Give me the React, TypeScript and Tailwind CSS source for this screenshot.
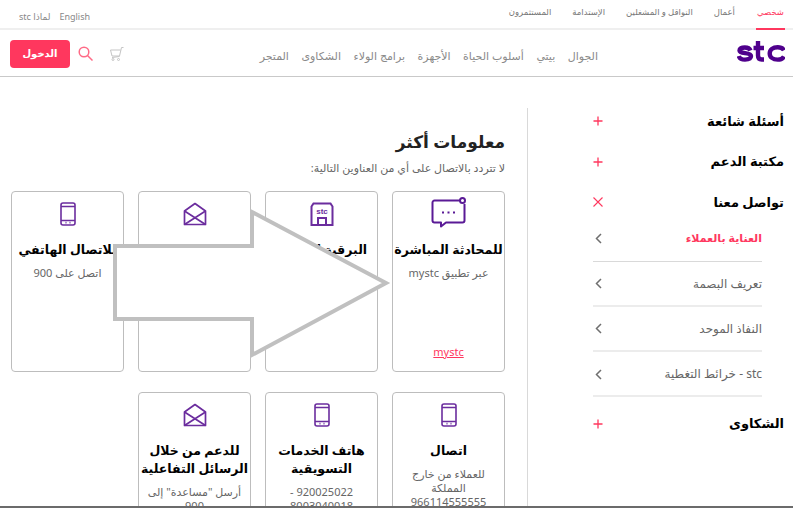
const font = { fontFamily: '"Noto Sans", "DejaVu Sans", sans-serif' }

function Phone() {
  return (
    <svg width="16" height="24" viewBox="0 0 16 24" fill="none" stroke="#6b2d9e" strokeWidth="1.6" className="block">
      <rect x="1" y="1" width="14" height="22" rx="2" />
      <path d="M1 4.500h14M1 18.500h14" />
      <path d="M5.500 20.600h1M9.500 20.600h1" />
    </svg>
  )
}

function Mail() {
  return (
    <svg width="24" height="24" viewBox="0 0 24 24" fill="none" stroke="#6b2d9e" strokeWidth="1.7" strokeLinejoin="round" className="block">
      <path d="M1.500 9 12 1.500 22.500 9v13.500h-21z" />
      <path d="M1.500 9 22.500 22.500M22.500 9 1.500 22.500" />
    </svg>
  )
}

function Store() {
  return (
    <svg width="24" height="24" viewBox="0 0 24 24" fill="none" stroke="#6b2d9e" strokeWidth="2" className="block">
      <path d="M3.500 1.500h17l2 3V23h-21V4.500z" />
      <path d="M8 23v-7h8v7" />
      <text x="12" y="11.500" textAnchor="middle" fontSize="8" fontWeight="700" fill="#6b2d9e" stroke="none" fontFamily="Liberation Sans">stc</text>
    </svg>
  )
}

function Chat() {
  return (
    <svg width="36" height="31" viewBox="0 0 36 31" fill="none" stroke="#5a1a96" strokeWidth="2" strokeLinejoin="round" className="-mt-[3px] block">
      <path d="M29 3.500H3.500a2 2 0 0 0-2 2v18a2 2 0 0 0 2 2h6.500v4l5-4h16.500a2 2 0 0 0 2-2V7" />
      <circle cx="31.500" cy="3.500" r="2.500" />
      <path d="M11 15.500h2M16.500 15.500h2M22 15.500h2" />
    </svg>
  )
}

function Chevron() {
  return (
    <svg width="7" height="11" viewBox="0 0 7 11" fill="none" stroke="#6f6f6f" strokeWidth="1.500">
      <path d="M6 1 1.500 5.500 6 10" />
    </svg>
  )
}

function Plus() {
  return (
    <svg width="10" height="10" viewBox="0 0 10 10" fill="none" stroke="#ff375e" strokeWidth="1.300">
      <path d="M5 .5v9M.5 5h9" />
    </svg>
  )
}

function Close() {
  return (
    <svg width="10" height="10" viewBox="0 0 10 10" fill="none" stroke="#ff375e" strokeWidth="1.100">
      <path d="M.5.5l9 9M9.500.5l-9 9" />
    </svg>
  )
}

function Logo() {
  return (
    <svg width="48" height="21" viewBox="0 0 48 21" fill="none" stroke="#4f008c" strokeWidth="4.400" className="block">
      <path d="M13.500 9.500c-.8-2-2.900-3-5.700-3-3.400 0-5.300 1.100-5.300 2.900 0 4 11.500 1.400 11.500 5.700 0 2-2.200 3.500-6 3.500-3.400 0-5.500-1.200-6.200-3.600" />
      <path d="M21 0v14.500c0 2.500 1.300 4 3.700 4h2.300M16.500 7h10.500" />
      <path d="M47 9.300c-1.100-2-3.200-3.100-6.300-3.100-4.900 0-8 2.500-8 6.200s3.100 6.200 8 6.200c3.100 0 5.200-1.100 6.300-3.100" />
    </svg>
  )
}

type CardProps = {
  icon: React.ReactNode
  title: string[]
  lines: string[]
  link?: string
}

function InfoCard({ icon, title, lines, link }: CardProps) {
  return (
    <div className="relative flex h-[181px] flex-col items-center rounded-sm border border-[#bdbdbd] bg-white px-2 text-center">
      <div className="flex h-[44px] items-center">{icon}</div>
      <div className="mt-[5px] flex min-h-[18px] flex-col">
        {title.map((t) => (
          <p key={t} className="text-[12.5px] font-bold leading-[18px] text-black whitespace-nowrap">
            {t}
          </p>
        ))}
      </div>
      <div className="mt-[7px]">
        {lines.map((l) => (
          <p key={l} className="text-[11px] leading-[14px] text-[#666]">
            {l}
          </p>
        ))}
      </div>
      {link && (
        <a className="mt-auto mb-[12px] text-[11px] leading-[14px] text-[#ff375e] underline">{link}</a>
      )}
    </div>
  )
}

const topLinks = ["أعمال", "النواقل و المشغلين", "الإستدامة", "المستثمرون"]
const navLinks = ["الجوال", "بيتي", "أسلوب الحياة", "الأجهزة", "برامج الولاء", "الشكاوى", "المتجر"]
const subLinks = ["تعريف البصمة", "النفاذ الموحد", "stc - خرائط التغطية"]

function Section({ title, icon }: { title: string; icon: React.ReactNode }) {
  return (
    <div className="flex h-[40.500px] items-center justify-between">
      <span className="text-[13px] font-bold text-black">{title}</span>
      {icon}
    </div>
  )
}

export default function App() {
  return (
    <div dir="rtl" style={font} className="relative h-[508px] w-[793px] overflow-hidden bg-white">
      <header className="flex h-[30px] items-end justify-between border-b-2 border-[#efefef] pr-[8px] pl-[19px]">
        <div className="flex items-end gap-[21px] text-[8.500px] text-[#777]">
          <span className="-mb-[2px] border-b-2 border-[#ff375e] px-[1px] pb-[9px] text-[#ff375e]">شخصي</span>
          {topLinks.map((l) => (
            <span key={l} className="pb-[9px]">{l}</span>
          ))}
        </div>
        <div className="flex gap-[9px] pb-[5px] text-[9px] text-[#888]">
          <span>English</span>
          <span>لماذا stc</span>
        </div>
      </header>

      <nav className="flex h-[47px] items-center justify-between border-b border-[#c9c9c9] pr-[8px] pl-[10px]">
        <div className="flex items-center gap-[14px]">
          <div className="-mt-[3px] w-[48px]">
            <Logo />
          </div>
          <div className="mr-[125px] flex gap-[12.500px] pt-[7px] text-[11px] text-[#8a8a8a]">
            {navLinks.map((l) => (
              <span key={l}>{l}</span>
            ))}
          </div>
        </div>
        <div className="flex items-center">
          <svg width="15" height="15" viewBox="0 0 15 15" fill="none" stroke="#c4c4c4" strokeWidth="1" className="ml-[16px]">
            <path d="M14.500 1.500h-2l-2 8.500H3L1.500 4h10" />
            <path d="M10.500 10.500 3 11.500" />
            <circle cx="4" cy="13.500" r="1" />
            <circle cx="9.500" cy="13.500" r="1" />
          </svg>
          <svg width="15" height="15" viewBox="0 0 15 15" fill="none" stroke="#ff6a86" strokeWidth="1.500" className="ml-[8px]">
            <circle cx="6" cy="6" r="4.800" />
            <path d="m9.500 9.500 5 5" />
          </svg>
          <button className="mt-[1px] h-[28px] w-[60px] rounded-sm bg-[#ff375e] text-[10px] font-bold text-white">الدخول</button>
        </div>
      </nav>

      <main className="flex h-[431px]">
        <aside className="mt-[31px] w-[266px] shrink-0 border-l border-[#d9d9d9] pr-[9px] pl-[65px]">
          <div className="-mt-[7px]">
            <Section title="أسئلة شائعة" icon={<Plus />} />
            <Section title="مكتبة الدعم" icon={<Plus />} />
            <Section title="تواصل معنا" icon={<Close />} />
          </div>
          <div className="pr-[22px]">
            <div className="flex h-[39px] items-center justify-between border-b border-[#d9d9d9] pb-[6px] text-[11px] font-bold text-[#ff375e]">
              <span>العناية بالعملاء</span>
              <span className="pl-[2px]"><Chevron /></span>
            </div>
            {subLinks.map((l) => (
              <div key={l} className="flex h-[45.300px] items-center justify-between border-b-2 border-[#ececec] pt-[1px] text-[12px] text-[#666]">
                <span>{l}</span>
                <span className="pl-[2px]"><Chevron /></span>
              </div>
            ))}
          </div>
          <div className="mt-[6px]">
            <Section title="الشكاوى" icon={<Plus />} />
          </div>
        </aside>

        <section className="flex-1 pt-[52px] pr-[22px] pl-[11px]">
          <h2 className="text-[17px] font-bold leading-[26px] text-[#222]">معلومات أكثر</h2>
          <p className="mt-[5px] text-[11px] leading-[16px] text-[#666]">لا تتردد بالاتصال على أي من العناوين التالية:</p>
          <div className="mt-[15px] grid grid-cols-4 gap-x-[14px] gap-y-[20px]">
            <InfoCard icon={<Chat />} title={["للمحادثة المباشرة"]} lines={["عبر تطبيق mystc"]} link="mystc" />
            <InfoCard icon={<Store />} title={["البرقية الفورية"]} lines={[]} />
            <InfoCard icon={<Mail />} title={["البريد الإلكتروني"]} lines={[]} />
            <InfoCard icon={<Phone />} title={["للاتصال الهاتفي"]} lines={["اتصل على 900"]} />
            <InfoCard icon={<Phone />} title={["اتصال"]} lines={["للعملاء من خارج", "المملكة", "966114555555"]} />
            <InfoCard icon={<Phone />} title={["هاتف الخدمات", "التسويقية"]} lines={["920025022 -", "8003040018"]} />
            <InfoCard icon={<Mail />} title={["للدعم من خلال", "الرسائل التفاعلية"]} lines={["أرسل \"مساعدة\" إلى", "900"]} />
          </div>
        </section>
      </main>

      <svg width="280" height="152" viewBox="0 0 280 152" className="absolute top-[208px] left-[112px]" fill="#fff" stroke="#c0c0c0" strokeWidth="4">
        <path d="M3 38h137V4l134 71-134 72v-36H3z" />
      </svg>
      <div className="absolute right-0 bottom-0 left-0 h-[2px] bg-[#6b6b6b]" />
    </div>
  )
}
